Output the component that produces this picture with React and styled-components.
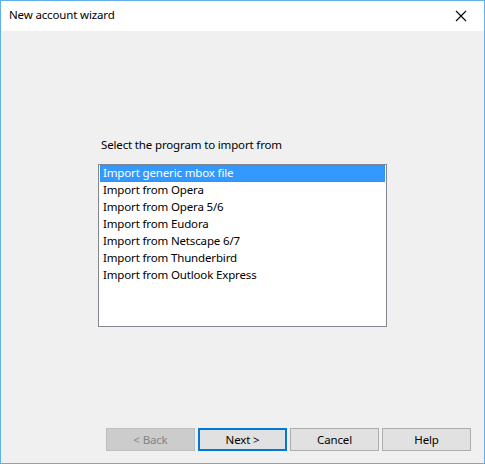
import React from "react";
import styled, { createGlobalStyle } from "styled-components";

const GlobalStyle = createGlobalStyle`
  html, body {
    margin: 0;
    padding: 0;
    background: #ffffff;
  }

  body {
    font-family: "Noto Sans", "Open Sans", sans-serif;
    font-size: 11.5px;
    letter-spacing: -0.15px;
    color: #000000;
  }
`;

const PROGRAMS = [
  "Import generic mbox file",
  "Import from Opera",
  "Import from Opera 5/6",
  "Import from Eudora",
  "Import from Netscape 6/7",
  "Import from Thunderbird",
  "Import from Outlook Express",
];

const CloseIcon = () => (
  <svg width="12" height="12" viewBox="0 0 12 12">
    <path d="M1 1 L11 11 M11 1 L1 11" stroke="#000" strokeWidth="1.1" />
  </svg>
);

const App = () => {
  const selected = 0;

  return (
    <>
      <GlobalStyle />
      <Window>
        <TitleBar>
          <Title>New account wizard</Title>
          <CloseButton>
            <CloseIcon />
          </CloseButton>
        </TitleBar>

        <Body>
          <Prompt>Select the program to import from</Prompt>

          <ListBox>
            {PROGRAMS.map((name, i) => (
              <ListItem key={name} $selected={i === selected}>
                {name}
              </ListItem>
            ))}
          </ListBox>

          <ButtonRow>
            <Button disabled>&lt; Back</Button>
            <Button $default>Next &gt;</Button>
            <Button>Cancel</Button>
            <Button>Help</Button>
          </ButtonRow>
        </Body>
      </Window>
    </>
  );
};

const Window = styled.div`
  box-sizing: border-box;
  width: 485px;
  height: 464px;
  border: 1px solid #62b0e8;
  display: flex;
  flex-direction: column;
  background: #f0f0f0;
`;

const TitleBar = styled.div`
  height: 30px;
  flex-shrink: 0;
  background: #ffffff;
  display: flex;
  align-items: center;
  justify-content: space-between;
  padding-left: 8px;
`;

const Title = styled.span`
  line-height: 16px;
  padding-bottom: 2px;
`;

const CloseButton = styled.div`
  width: 46px;
  height: 30px;
  display: flex;
  align-items: center;
  justify-content: center;
  padding-bottom: 1px;
  box-sizing: border-box;

  svg {
    display: block;
  }
`;

const Body = styled.div`
  flex: 1;
  display: flex;
  flex-direction: column;
  padding: 106px 13px 12px 97px;
`;

const Prompt = styled.div`
  line-height: 16px;
  margin: 0 0 11px 3px;
`;

const ListBox = styled.div`
  box-sizing: border-box;
  width: 289px;
  height: 163px;
  border: 1px solid #828790;
  background: #ffffff;
  padding: 0 1px;
`;

const ListItem = styled.div`
  box-sizing: border-box;
  height: 17px;
  line-height: 16px;
  padding-left: 3px;
  white-space: nowrap;
  background: ${(p) => (p.$selected ? "#3399ff" : "transparent")};
  color: ${(p) => (p.$selected ? "#ffffff" : "#000000")};
  outline: ${(p) => (p.$selected ? "1px dotted #cc6600" : "none")};
  outline-offset: -1px;
`;

const ButtonRow = styled.div`
  margin-top: auto;
  display: flex;
  justify-content: flex-end;
  gap: 3px;
`;

const Button = styled.button`
  box-sizing: border-box;
  width: 89px;
  height: 23px;
  padding: 0 0 1px;
  font-family: inherit;
  font-size: inherit;
  letter-spacing: inherit;
  color: #000000;
  background: #e1e1e1;
  border: ${(p) => (p.$default ? "2px solid #0078d7" : "1px solid #adadad")};

  &:disabled {
    background: #cccccc;
    border-color: #bfbfbf;
    color: #838383;
  }
`;

export default App;
